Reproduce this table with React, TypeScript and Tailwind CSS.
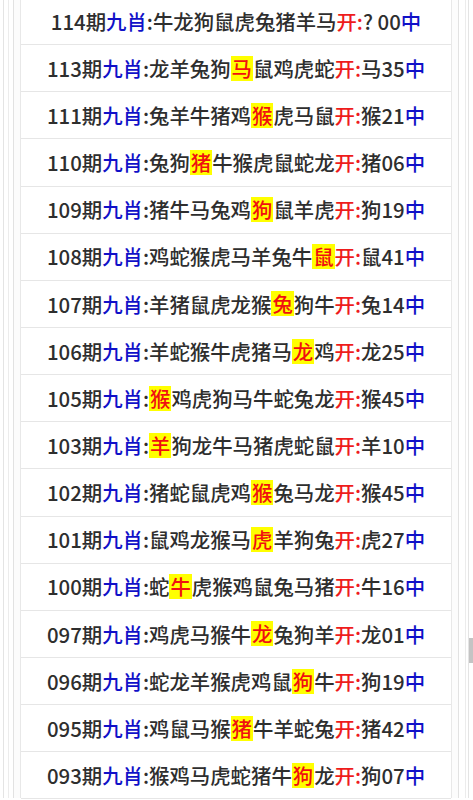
import React from 'react'

type Row = { no: string; picks: string; hit: number; open: string }

// hit = index of highlighted animal in picks, -1 for none
const ROWS: Row[] = [
  { no: '114', picks: '牛龙狗鼠虎兔猪羊马', hit: -1, open: '? 00' },
  { no: '113', picks: '龙羊兔狗马鼠鸡虎蛇', hit: 4, open: '马35' },
  { no: '111', picks: '兔羊牛猪鸡猴虎马鼠', hit: 5, open: '猴21' },
  { no: '110', picks: '兔狗猪牛猴虎鼠蛇龙', hit: 2, open: '猪06' },
  { no: '109', picks: '猪牛马兔鸡狗鼠羊虎', hit: 5, open: '狗19' },
  { no: '108', picks: '鸡蛇猴虎马羊兔牛鼠', hit: 8, open: '鼠41' },
  { no: '107', picks: '羊猪鼠虎龙猴兔狗牛', hit: 6, open: '兔14' },
  { no: '106', picks: '羊蛇猴牛虎猪马龙鸡', hit: 7, open: '龙25' },
  { no: '105', picks: '猴鸡虎狗马牛蛇兔龙', hit: 0, open: '猴45' },
  { no: '103', picks: '羊狗龙牛马猪虎蛇鼠', hit: 0, open: '羊10' },
  { no: '102', picks: '猪蛇鼠虎鸡猴兔马龙', hit: 5, open: '猴45' },
  { no: '101', picks: '鼠鸡龙猴马虎羊狗兔', hit: 5, open: '虎27' },
  { no: '100', picks: '蛇牛虎猴鸡鼠兔马猪', hit: 1, open: '牛16' },
  { no: '097', picks: '鸡虎马猴牛龙兔狗羊', hit: 5, open: '龙01' },
  { no: '096', picks: '蛇龙羊猴虎鸡鼠狗牛', hit: 7, open: '狗19' },
  { no: '095', picks: '鸡鼠马猴猪牛羊蛇兔', hit: 4, open: '猪42' },
  { no: '093', picks: '猴鸡马虎蛇猪牛狗龙', hit: 7, open: '狗07' },
]

function RecordRow({ row }: { row: Row }) {
  const chars = Array.from(row.picks)
  return (
    <div className="h-[47.15px] flex items-center justify-center border-b border-[#e6e6e6] whitespace-nowrap text-[20.4px] font-medium text-[#2e2e2e]">
      <span>{row.no}期</span>
      <span className="text-[#1010c8]">九肖</span>
      <span>:</span>
      {chars.map((c, i) =>
        i === row.hit ? (
          <span key={i} className="bg-[#ffff00] text-[#f01010] px-[1px] leading-[25px]">
            {c}
          </span>
        ) : (
          <span key={i}>{c}</span>
        )
      )}
      <span className="text-[#ee1c1c]">开:</span>
      <span>{row.open}</span>
      <span className="text-[#1010c8]">中</span>
    </div>
  )
}

export default function App() {
  return (
    <div
      className="relative h-[800px] w-[473px] overflow-hidden bg-white"
      style={{ fontFamily: '"Noto Sans CJK SC", "Noto Sans", sans-serif' }}
    >
      {/* nested frames */}
      <div className="ml-[3px] w-[466px] h-full border-x border-[#e4e4e4] pl-[4px] pr-[2px]">
        <div className="h-full border-x border-[#ececec] pl-[4px] pr-[6px]">
          <div className="h-full border-x border-[#e2e2e2] pl-[6px] pr-[6px] bg-[#fcfcfc]">
            <div className="h-full border-x border-[#e8e8e8] bg-white -mt-[2px]">
              {ROWS.map((r) => (
                <RecordRow key={r.no} row={r} />
              ))}
            </div>
          </div>
        </div>
      </div>

      {/* scrollbar thumb */}
      <div className="absolute right-0 top-[638px] w-[4px] h-[25px] bg-[#c4c4c4]" />
    </div>
  )
}
